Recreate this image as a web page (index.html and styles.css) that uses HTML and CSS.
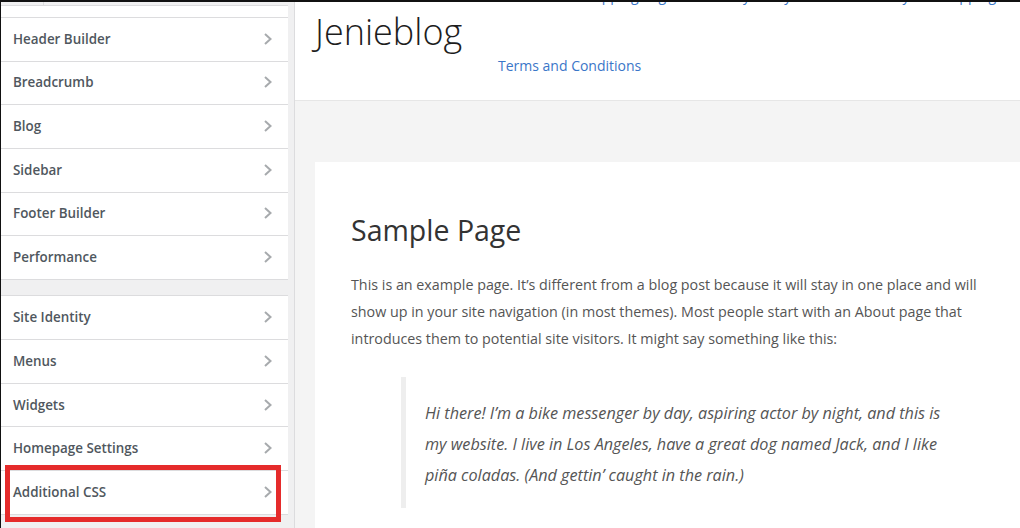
FILE: index.html
```html
<!DOCTYPE html>
<html lang="en">
<head>
<meta charset="utf-8">
<title>Customizer</title>
<link rel="stylesheet" href="styles.css">
</head>
<body>
<div class="app">
  <aside class="sidebar">
    <div class="panel">
      <div class="panel-top"><span class="panel-tab"></span></div>
      <div class="panel-head"></div>
      <ul class="menu">
        <li class="item"><span>Header Builder</span><svg class="chev" viewBox="0 0 8 12"><path d="M1 1l5.5 5L1 11"/></svg></li>
        <li class="item"><span>Breadcrumb</span><svg class="chev" viewBox="0 0 8 12"><path d="M1 1l5.5 5L1 11"/></svg></li>
        <li class="item"><span>Blog</span><svg class="chev" viewBox="0 0 8 12"><path d="M1 1l5.5 5L1 11"/></svg></li>
        <li class="item"><span>Sidebar</span><svg class="chev" viewBox="0 0 8 12"><path d="M1 1l5.5 5L1 11"/></svg></li>
        <li class="item"><span>Footer Builder</span><svg class="chev" viewBox="0 0 8 12"><path d="M1 1l5.5 5L1 11"/></svg></li>
        <li class="item"><span>Performance</span><svg class="chev" viewBox="0 0 8 12"><path d="M1 1l5.5 5L1 11"/></svg></li>
      </ul>
      <ul class="menu menu-second">
        <li class="item"><span>Site Identity</span><svg class="chev" viewBox="0 0 8 12"><path d="M1 1l5.5 5L1 11"/></svg></li>
        <li class="item"><span>Menus</span><svg class="chev" viewBox="0 0 8 12"><path d="M1 1l5.5 5L1 11"/></svg></li>
        <li class="item"><span>Widgets</span><svg class="chev" viewBox="0 0 8 12"><path d="M1 1l5.5 5L1 11"/></svg></li>
        <li class="item"><span>Homepage Settings</span><svg class="chev" viewBox="0 0 8 12"><path d="M1 1l5.5 5L1 11"/></svg></li>
        <li class="item item-marked"><span>Additional CSS</span><svg class="chev" viewBox="0 0 8 12"><path d="M1 1l5.5 5L1 11"/></svg><span class="highlight"></span></li>
      </ul>
    </div>
    <div class="track"></div>
  </aside>
  <main class="preview">
    <header class="site-header">
      <nav class="top-nav">
        <a href="#">Shopping Page</a>
        <a href="#">Privacy Policy</a>
        <a href="#">Refund Policy</a>
        <a href="#">Shipping Policy</a>
      </nav>
      <div class="brand">Jenieblog</div>
      <a class="sub-link" href="#">Terms and Conditions</a>
    </header>
    <article class="card">
      <h1 class="title">Sample Page</h1>
      <p class="text">This is an example page. It’s different from a blog post because it will stay in one place and will<br>show up in your site navigation (in most themes). Most people start with an About page that<br>introduces them to potential site visitors. It might say something like this:</p>
      <blockquote class="quote">
        <p>Hi there! I’m a bike messenger by day, aspiring actor by night, and this is<br>my website. I live in Los Angeles, have a great dog named Jack, and I like<br>piña coladas. (And gettin’ caught in the rain.)</p>
      </blockquote>
    </article>
  </main>
</div>
</body>
</html>
```
FILE: styles.css
```css
* { box-sizing: border-box; }
html, body { margin: 0; padding: 0; }
body {
  width: 1020px;
  height: 528px;
  overflow: hidden;
  background: #f4f4f4;
  font-family: "Open Sans", "Noto Sans", sans-serif;
}
.app {
  display: grid;
  grid-template-columns: 295px 1fr;
  height: 528px;
  border-top: 2px solid #111;
}
.sidebar {
  display: flex;
  border-left: 1px solid #111;
  border-right: 1px solid #dcdcde;
  background: #f0f0f1;
  overflow: hidden;
}
.panel {
  width: 287px;
  flex: none;
  background: #f0f0f1;
}
.track {
  flex: 1;
  background: #f0f0f1;
}
.panel-top {
  height: 3px;
  display: flex;
}
.panel-tab {
  width: 43px;
  border-right: 1px solid #dcdcde;
}
.panel-head {
  height: 12px;
  background: #fff;
  border-top: 1px solid #dcdcde;
}
.menu {
  list-style: none;
  margin: 0;
  padding: 0;
  background: #fff;
  border-top: 1px solid #dcdcde;
}
.menu-second { margin-top: 15.5px; }
.item {
  position: relative;
  height: 43.67px;
  border-bottom: 1px solid #dcdcde;
  display: flex;
  align-items: center;
  justify-content: space-between;
  padding: 0 16px 1px 12px;
  color: #50575e;
  font-size: 13.4px;
  font-weight: 600;
}
.chev {
  width: 8px;
  height: 12px;
  fill: none;
  stroke: #a7aaad;
  stroke-width: 2;
}
.highlight {
  position: absolute;
  left: 4px;
  top: -6px;
  width: 276px;
  height: 57px;
  border: 5px solid #e52b2b;
  pointer-events: none;
}
.preview {
  background: #f4f4f4;
  overflow: hidden;
  min-width: 0;
}
.site-header {
  height: 99px;
  background: #fff;
  border-bottom: 1px solid #e6e6e6;
  padding-left: 20px;
  overflow: hidden;
  display: flex;
  flex-direction: column;
}
.top-nav {
  display: flex;
  gap: 30px;
  margin: -16px 0 0 262px;
  height: 20px;
  line-height: 20px;
  font-size: 14px;
  white-space: nowrap;
}
.top-nav a { color: #3a76c8; text-decoration: none; }
.brand {
  margin-top: 6px;
  font-size: 36px;
  font-weight: 300;
  line-height: 40px;
  color: #1d1d1d;
}
.sub-link {
  margin: 4px 0 0 183px;
  font-size: 14px;
  line-height: 20px;
  color: #3a76c8;
  text-decoration: none;
}
.card {
  margin: 61px 0 0 20px;
  background: #fff;
  padding: 51px 0 40px 36px;
  min-height: 400px;
}
.title {
  margin: 0;
  font-size: 28.5px;
  font-weight: 400;
  line-height: 35px;
  color: #333;
}
.text {
  margin: 23px 0 0;
  font-size: 14.3px;
  line-height: 27px;
  color: #555;
  white-space: nowrap;
}
.quote {
  margin: 25px 0 0 50px;
  border-left: 5px solid #eee;
  padding: 21px 0 17px 19px;
}
.quote p {
  margin: 0;
  font-size: 16.2px;
  font-style: italic;
  line-height: 31px;
  color: #555;
  white-space: nowrap;
}
```
